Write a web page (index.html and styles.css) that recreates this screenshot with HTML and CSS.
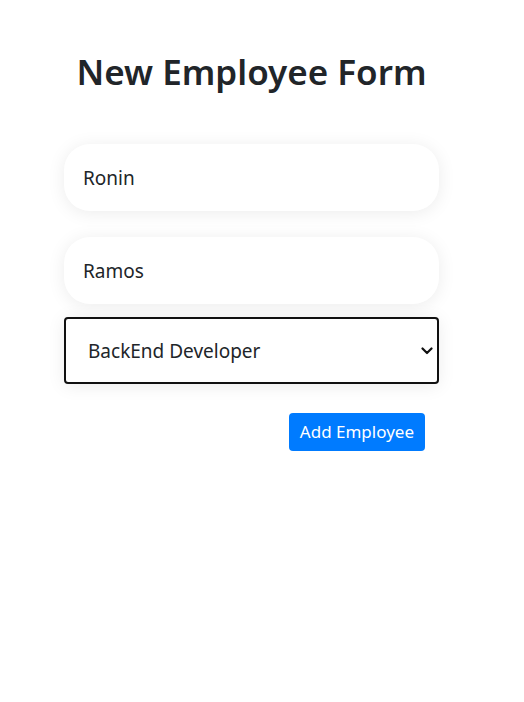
FILE: index.html
```html
<!DOCTYPE html>
<html>
<head>
<meta charset="utf-8">
<link rel="stylesheet" href="styles.css">
</head>
<body>
<div class="page">
  <h1 class="title">New Employee Form</h1>
  <form class="form">
    <input class="field" type="text" value="Ronin">
    <input class="field" type="text" value="Ramos">
    <div class="select-wrap">
      <select class="select">
        <option>BackEnd Developer</option>
      </select>
      <svg class="chevron" width="12" height="8" viewBox="0 0 12 8"><path d="M1.5 1.5 L6 6 L10.5 1.5" fill="none" stroke="#111" stroke-width="2.2" stroke-linecap="round" stroke-linejoin="round"/></svg>
    </div>
    <div class="actions">
      <button class="btn" type="button">Add Employee</button>
    </div>
  </form>
</div>
</body>
</html>
```
FILE: styles.css
```css
* { box-sizing: border-box; }
html, body { margin: 0; padding: 0; background: #fff; }
body { font-family: "Noto Sans", "Open Sans", sans-serif; color: #212529; }
.page { width: 375px; margin-left: 64px; padding-top: 48px; }
.title { margin: 0; text-align: center; font-size: 35px; font-weight: 600; line-height: 48px; color: #212529; }
.form { margin-top: 48px; display: flex; flex-direction: column; }
.field { display: block; width: 375px; height: 67px; border: none; border-radius: 26px; background: #fff; box-shadow: 0 2px 18px rgba(0,0,0,0.08); padding: 0 19px; font-family: inherit; font-size: 19px; color: #212529; margin-bottom: 26px; outline: none; }
.field + .field { margin-bottom: 13px; }
.select-wrap { position: relative; width: 375px; height: 67px; }
.select { appearance: none; -webkit-appearance: none; display: block; width: 100%; height: 100%; border: 2px solid #111; border-radius: 4px; background: #fff; box-shadow: 0 2px 18px rgba(0,0,0,0.08); padding: 0 22px; font-family: inherit; font-size: 19px; color: #212529; outline: none; }
.chevron { position: absolute; right: 6px; top: 30px; }
.actions { display: flex; justify-content: flex-end; padding-right: 14px; margin-top: 29px; }
.btn { background: #007bff; color: #fff; border: none; border-radius: 4px; height: 38px; padding: 0 11px; font-family: inherit; font-size: 17px; line-height: 38px; cursor: pointer; }
```
